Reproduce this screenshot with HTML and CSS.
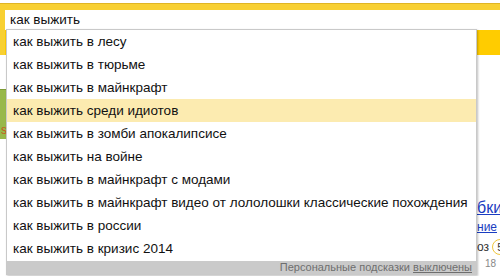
FILE: index.html
```html
<!DOCTYPE html>
<html lang="ru">
<head>
<meta charset="utf-8">
<title>как выжить</title>
<link rel="stylesheet" href="styles.css">
</head>
<body>
<div class="head">
  <div class="search">
    <div class="search-input">как выжить</div>
    <div class="search-btn"></div>
  </div>

  <div class="suggest">
    <div class="item">как выжить в лесу</div>
    <div class="item">как выжить в тюрьме</div>
    <div class="item">как выжить в майнкрафт</div>
    <div class="item active">как выжить среди идиотов</div>
    <div class="item">как выжить в зомби апокалипсисе</div>
    <div class="item">как выжить на войне</div>
    <div class="item">как выжить в майнкрафт с модами</div>
    <div class="item">как выжить в майнкрафт видео от лололошки классические похождения</div>
    <div class="item">как выжить в россии</div>
    <div class="item">как выжить в кризис 2014</div>
    <div class="suggest-foot">Персональные подсказки <a href="#">выключены</a></div>
  </div>
</div>

<div class="page">
  <div class="side">
    <div class="side-tab">s</div>
  </div>
  <div class="results">
    <a class="res-title" href="#">бки</a>
    <a class="res-link" href="#">ние</a>
    <div class="res-meta">оз <span class="badge">5</span></div>
    <div class="res-date">18</div>
  </div>
</div>
</body>
</html>
```

FILE: styles.css
```css
html {
  background: #fff;
}
body {
  margin: 0;
  height: 276px;
  overflow: hidden;
  font-family: "Liberation Sans", Arial, sans-serif;
  color: #000;
  background: #fff;
}
.head {
  position: relative;
  z-index: 2;
  padding-top: 3px;
}
.search {
  display: flex;
  flex-direction: column;
  height: 52px;
  padding: 6px 0 0 5px;
  background: #f8d032;
  border-top: 1px solid #e0b524;
  box-sizing: border-box;
}
.search-input {
  height: 20px;
  padding-left: 5px;
  background: #fff;
  font-size: 13.5px;
  line-height: 20px;
  color: #111;
}
.search-btn {
  flex: 1;
  background: #ffcc00;
}
/* dropdown with suggestions */
.suggest {
  position: absolute;
  top: 29px;
  left: 6px;
  width: 469px;
  background: #fff;
  border: 1px solid #c9c9c9;
  box-shadow: 1px 1px 2px rgba(0, 0, 0, 0.25);
  font-size: 13.5px;
}
.item {
  height: 23px;
  padding-left: 6px;
  line-height: 23px;
  white-space: nowrap;
  color: #111;
}
.item.active {
  background: #fcebb0;
}
.suggest-foot {
  height: 13px;
  margin-top: 1px;
  padding-right: 4px;
  background: #cacaca;
  font-size: 11px;
  line-height: 13px;
  text-align: right;
  color: #6e6e6e;
}
.suggest-foot a {
  color: #6e6e6e;
}
.page {
  display: flex;
  overflow: hidden;
}
.side {
  width: 8px;
  padding-top: 34px;
}
.side-tab {
  height: 50px;
  background: #98b84a;
  border-top: 1px solid #7e9c35;
  box-sizing: border-box;
  padding-top: 33px;
  padding-left: 1px;
  font-size: 12px;
  color: #c9581c;
  overflow: hidden;
}
.results {
  display: flex;
  flex-direction: column;
  width: 23px;
  margin-left: 469px;
  padding-top: 143px;
  white-space: nowrap;
}
.res-title {
  font-size: 16px;
  line-height: 20px;
  color: #1a3dc1;
}
.res-link {
  font-size: 12px;
  line-height: 18px;
  color: #1a3dc1;
}
.res-meta {
  font-size: 12px;
  line-height: 22px;
  color: #333;
}
.badge {
  display: inline-block;
  width: 14px;
  height: 14px;
  border: 1px solid #f0c53a;
  border-radius: 50%;
  font-size: 11px;
  line-height: 14px;
  text-align: center;
}
.res-date {
  padding-left: 8px;
  font-size: 10px;
  color: #888;
}
```
